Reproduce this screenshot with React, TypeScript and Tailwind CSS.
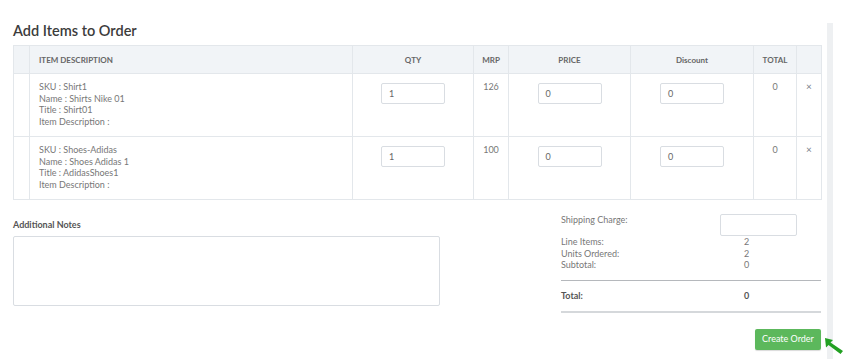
import React from "react";

const items = [
  { sku: "Shirt1", name: "Shirts Nike 01", title: "Shirt01", mrp: "126" },
  { sku: "Shoes-Adidas", name: "Shoes Adidas 1", title: "AdidasShoes1", mrp: "100" },
];

function Box({ value, w = "w-[64px]" }: { value: string; w?: string }) {
  return (
    <div
      className={`${w} h-[21px] border border-[#d9dde2] rounded-[2px] bg-white flex items-center pl-[7px] text-[9px] text-[#666]`}
    >
      {value}
    </div>
  );
}

export default function App() {
  return (
    <div
      className="relative w-[852px] h-[359px] bg-white overflow-hidden"
      style={{ fontFamily: "Lato, 'Open Sans', sans-serif" }}
    >
      <div className="flex">
        <div className="w-[827px] pl-[13px] pr-[6px]">
          <h2 className="pt-[22px] h-[45px] text-[14.5px] leading-[18px] font-semibold text-[#3c3c3c]">
            Add Items to Order
          </h2>
          <table className="table-fixed border-collapse w-[808px] text-[#777]">
            <colgroup>
              <col className="w-[16px]" />
              <col className="w-[323px]" />
              <col className="w-[121px]" />
              <col className="w-[35px]" />
              <col className="w-[122px]" />
              <col className="w-[123px]" />
              <col className="w-[43px]" />
              <col className="w-[25px]" />
            </colgroup>
            <thead>
              <tr className="h-[28px] bg-[#f1f4f7] text-[8px] font-semibold text-[#666]">
                <th className="border border-[#e3e7eb]"></th>
                <th className="border border-[#e3e7eb] text-left pl-[9px]">ITEM DESCRIPTION</th>
                <th className="border border-[#e3e7eb] text-center">QTY</th>
                <th className="border border-[#e3e7eb] text-center">MRP</th>
                <th className="border border-[#e3e7eb] text-center">PRICE</th>
                <th className="border border-[#e3e7eb] text-center">Discount</th>
                <th className="border border-[#e3e7eb] text-center">TOTAL</th>
                <th className="border border-[#e3e7eb]"></th>
              </tr>
            </thead>
            <tbody>
              {items.map((it) => (
                <tr key={it.sku} className="h-[63px] text-[9px] align-top">
                  <td className="border border-[#e3e7eb]"></td>
                  <td className="border border-[#e3e7eb] pl-[9px] pt-[7px] leading-[11.7px]">
                    <div>SKU : {it.sku}</div>
                    <div>Name : {it.name}</div>
                    <div>Title : {it.title}</div>
                    <div>Item Description :</div>
                  </td>
                  <td className="border border-[#e3e7eb] pt-[9px]">
                    <div className="flex justify-center">
                      <Box value="1" />
                    </div>
                  </td>
                  <td className="border border-[#e3e7eb] pt-[7px] text-center leading-[11px]">{it.mrp}</td>
                  <td className="border border-[#e3e7eb] pt-[9px]">
                    <div className="flex justify-center">
                      <Box value="0" />
                    </div>
                  </td>
                  <td className="border border-[#e3e7eb] pt-[9px]">
                    <div className="flex justify-center">
                      <Box value="0" />
                    </div>
                  </td>
                  <td className="border border-[#e3e7eb] pt-[7px] text-center leading-[11px]">0</td>
                  <td className="border border-[#e3e7eb] pt-[7px] text-center leading-[11px] text-[10px] text-[#7a8089]">
                    ×
                  </td>
                </tr>
              ))}
            </tbody>
          </table>

          <div className="flex mt-[14px]">
            <div className="w-[427px] pt-[5px]">
              <div className="text-[9px] leading-[11px] font-bold text-[#555]">Additional Notes</div>
              <div className="mt-[6px] h-[70px] border border-[#d9dde2] rounded-[2px] bg-white"></div>
            </div>
            <div className="ml-[121px] w-[260px] text-[9px] text-[#777]">
              <div className="flex">
                <div className="w-[159px] leading-[11px]">Shipping Charge:</div>
                <div className="w-[77px] h-[22px] border border-[#d9dde2] rounded-[2px] bg-white"></div>
              </div>
              <div className="flex leading-[11.5px] mt-[0px]">
                <div className="w-[183px]">
                  <div>Line Items:</div>
                  <div>Units Ordered:</div>
                  <div>Subtotal:</div>
                </div>
                <div>
                  <div>2</div>
                  <div>2</div>
                  <div>0</div>
                </div>
              </div>
              <div className="mt-[9px] h-px bg-[#b5b8bc]"></div>
              <div className="flex h-[30px] items-center font-bold text-[#555]">
                <div className="w-[183px]">Total:</div>
                <div>0</div>
              </div>
              <div className="h-[2px] bg-[#d5d8db]"></div>
              <div className="flex justify-end mt-[16px]">
                <button className="w-[66px] h-[21px] bg-[#5cb85c] text-white text-[9px] rounded-[2px] shadow-[0_1px_1px_rgba(0,0,0,0.15)]">
                  Create Order
                </button>
              </div>
            </div>
          </div>
        </div>
        <div className="w-[6px] mt-[23px] h-[336px] bg-[#eef0f2]"></div>
      </div>
      <svg
        className="absolute left-[823px] top-[337px]"
        width="22"
        height="18"
        viewBox="0 0 22 18"
      >
        <path d="M2 1 L10 3 L7.5 5.5 L20 14 L17.5 17 L5.5 8 L3 10.5 Z" fill="#22a022" />
      </svg>
    </div>
  );
}
